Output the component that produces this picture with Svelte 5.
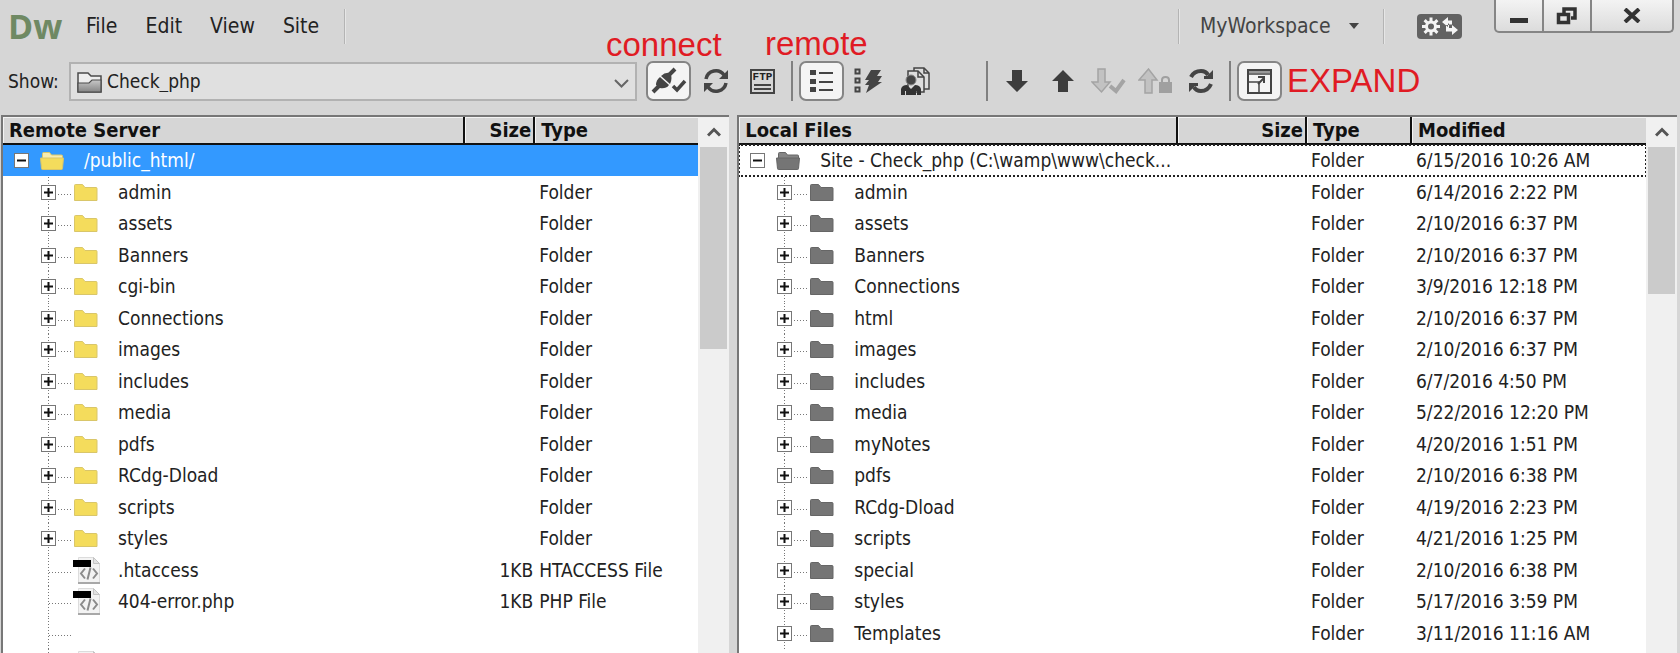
<script>
  const menus = ["File", "Edit", "View", "Site"];

  const remoteRows = [
    { name: "/public_html/", kind: "root", size: "", type: "" },
    { name: "admin", kind: "folder", size: "", type: "Folder" },
    { name: "assets", kind: "folder", size: "", type: "Folder" },
    { name: "Banners", kind: "folder", size: "", type: "Folder" },
    { name: "cgi-bin", kind: "folder", size: "", type: "Folder" },
    { name: "Connections", kind: "folder", size: "", type: "Folder" },
    { name: "images", kind: "folder", size: "", type: "Folder" },
    { name: "includes", kind: "folder", size: "", type: "Folder" },
    { name: "media", kind: "folder", size: "", type: "Folder" },
    { name: "pdfs", kind: "folder", size: "", type: "Folder" },
    { name: "RCdg-Dload", kind: "folder", size: "", type: "Folder" },
    { name: "scripts", kind: "folder", size: "", type: "Folder" },
    { name: "styles", kind: "folder", size: "", type: "Folder" },
    { name: ".htaccess", kind: "file", size: "1KB", type: "HTACCESS File" },
    { name: "404-error.php", kind: "file", size: "1KB", type: "PHP File" },
    { name: "", kind: "blank", size: "", type: "" },
    { name: "", kind: "file", size: "", type: "" },
  ];

  const localRows = [
    ["Site - Check_php (C:\\wamp\\www\\check...", "6/15/2016 10:26 AM"],
    ["admin", "6/14/2016 2:22 PM"],
    ["assets", "2/10/2016 6:37 PM"],
    ["Banners", "2/10/2016 6:37 PM"],
    ["Connections", "3/9/2016 12:18 PM"],
    ["html", "2/10/2016 6:37 PM"],
    ["images", "2/10/2016 6:37 PM"],
    ["includes", "6/7/2016 4:50 PM"],
    ["media", "5/22/2016 12:20 PM"],
    ["myNotes", "4/20/2016 1:51 PM"],
    ["pdfs", "2/10/2016 6:38 PM"],
    ["RCdg-Dload", "4/19/2016 2:23 PM"],
    ["scripts", "4/21/2016 1:25 PM"],
    ["special", "2/10/2016 6:38 PM"],
    ["styles", "5/17/2016 3:59 PM"],
    ["Templates", "3/11/2016 11:16 AM"],
  ].map(([name, modified], i) => ({
    name,
    kind: i == 0 ? "root" : "folder",
    size: "",
    type: "Folder",
    modified,
  }));

  const panels = [
    { id: "remote", title: "Remote Server", rows: remoteRows, thumb: 40 },
    { id: "local", title: "Local Files", rows: localRows, thumb: 29 },
  ];

  let site = $state("Check_php");
  let workspace = $state("MyWorkspace");
  let view = $state("files");
  let connected = $state(true);
  let expanded = $state(true);
</script>

{#snippet folder(open, local)}
  <svg class="icon" width="30" height="31" viewBox="0 0 30 31" aria-hidden="true">
    <g
      fill={local ? "#757575" : "#f4dc5c"}
      stroke={local ? "#666" : "#d9c66a"}
      stroke-linejoin="round"
    >
      {#if open}
        <path
          d="M4.500 13V8.500q0-1 1-1h6l2 2.500h10q1 0 1 1v2"
          fill={local ? "#858585" : "#f7ecb0"}
        />
        <path d="M2.500 13h23l-1 10.500q0 1-1 1h-19q-1 0-1-1z" />
      {:else}
        <path d="M2.500 23.500v-15q0-1 1-1h7l2.500 3h11q1 0 1 1v12z" />
      {/if}
    </g>
  </svg>
{/snippet}

{#snippet file()}
  <svg class="icon" width="30" height="31" viewBox="0 0 30 31" aria-hidden="true">
    <path d="M6.500 2.500h15l6 6v19h-21z" fill="#f3f3f3" stroke="#dcdcdc" />
    <path d="M21.500 2.500v6h6z" fill="#e2e2e2" stroke="#c4c4c4" />
    <path d="M6 28h22" stroke="#a8a8a8" stroke-width="2" />
    <path
      d="M13 13.500l-4 5 4 5M21 13.500l4 5-4 5M18.500 12.500l-3 12"
      fill="none"
      stroke="#8b8b8b"
      stroke-width="2"
    />
    <path d="M1 5h18v7H1z" fill="#000" />
  </svg>
{/snippet}

<div class="window">
  <header class="menubar">
    <span class="logo">Dw</span>
    <nav>
      {#each menus as menu}
        <button class="menu">{menu}</button>
      {/each}
    </nav>
    <span class="rule"></span>
    <div class="right">
      <span class="rule"></span>
      <div class="workspace">
        <select bind:value={workspace} aria-label="Workspace">
          <option>MyWorkspace</option>
        </select>
        <svg width="10" height="6" viewBox="0 0 10 6"><path d="M0 0h10L5 6z" fill="#444" /></svg>
      </div>
      <span class="rule"></span>
      <button class="sync" aria-label="Sync settings">
        <svg width="45" height="25" viewBox="0 0 45 25">
          <g stroke="#f4f4f4" fill="none">
            <circle cx="14" cy="12.500" r="4.500" stroke-width="3" />
            <path
              d="M14 3.500v4M14 17.500v4M5 12.500h4M19 12.500h4M7.600 6.100l3 3M17.400 15.900l3 3M7.600 18.900l3-3M17.400 9.100l3-3"
              stroke-width="3"
            />
          </g>
          <path
            d="M25 8l6-5v3.500h4v4h-3v-1h-1V13zM41 16l-6-5v3h-3v-3h-3v6.500h6V21z"
            fill="#f4f4f4"
          />
        </svg>
      </button>
      <div class="controls">
        <button aria-label="Minimize">
          <svg width="18" height="16" viewBox="0 0 18 16"><path d="M0 10h18v5H0z" fill="#333" /></svg>
        </button>
        <button aria-label="Restore">
          <svg width="22" height="18" viewBox="0 0 22 18">
            <path d="M8 6V2h11v9h-4M2.500 7.500h10v8h-10z" fill="none" stroke="#333" stroke-width="3.500" />
          </svg>
        </button>
        <button class="close" aria-label="Close">
          <svg width="18" height="15" viewBox="0 0 18 15">
            <path d="M2 1l14 13M16 1L2 14" stroke="#333" stroke-width="4" />
          </svg>
        </button>
      </div>
    </div>
  </header>

  <div class="toolbar">
    <label class="show" for="site">Show:</label>
    <div class="site">
      <svg class="site-icon" width="25" height="21" viewBox="0 0 25 21">
        <defs>
          <linearGradient id="metal" x2="0" y2="1">
            <stop offset="0" stop-color="#c8c8c8" />
            <stop offset="1" stop-color="#858585" />
          </linearGradient>
        </defs>
        <path d="M1 20V1h10l3 3h10v16z" fill="#eee" stroke="#4b4b4b" stroke-width="1.500" />
        <path d="M1 20v-9h11l3-3h9v12z" fill="url(#metal)" stroke="#4b4b4b" stroke-width="1.200" />
      </svg>
      <select id="site" bind:value={site}>
        <option>Check_php</option>
      </select>
      <svg class="chevron" width="15" height="9" viewBox="0 0 15 9">
        <path d="M1 1l6.500 6.500L14 1" fill="none" stroke="#666" stroke-width="2" />
      </svg>
    </div>

    <div class="group">
      <span class="note above">connect</span>
      <button
        class="tool"
        class:pressed={connected}
        aria-label="Connect"
        onclick={() => (connected = !connected)}
      >
        <svg width="36" height="28" viewBox="0 0 36 28">
          <path d="M2 25l7-7M18 8l6-6" stroke="#444" stroke-width="4" />
          <path d="M5 18q0-5 4-8l9 8q-3 4-9 3z" fill="#444" />
          <path d="M10 9q4-4 9-3 3 5 0 11z" fill="#444" />
          <path d="M22 19l4 4 8-9" fill="none" stroke="#444" stroke-width="3.500" />
        </svg>
      </button>
      <button class="tool" aria-label="Refresh">
        <svg width="26" height="26" viewBox="0 0 26 26">
          <path d="M3 11a10 10 0 0 1 18-4M23 15a10 10 0 0 1-18 4" fill="none" stroke="#444" stroke-width="3.500" />
          <path d="M25 2v9h-9zM1 24v-9h9z" fill="#444" />
        </svg>
      </button>
      <button class="tool ftp" aria-label="FTP log">
        <span>FTP</span>
        <i></i>
        <i></i>
      </button>
    </div>
    <span class="divider"></span>
    <div class="group">
      <span class="note above">remote</span>
      <button
        class="tool"
        class:pressed={view == "files"}
        aria-label="Site files"
        onclick={() => (view = "files")}
      >
        <svg width="24" height="24" viewBox="0 0 24 24">
          <path d="M0 1h6v5H0zM0 10h6v5H0zM0 18h6v5H0z" fill="#444" />
          <path d="M9 4h14M9 13h14M9 21h14" stroke="#444" stroke-width="2" />
        </svg>
      </button>
      <button
        class="tool"
        class:pressed={view == "testing"}
        aria-label="Testing server"
        onclick={() => (view = "testing")}
      >
        <svg width="29" height="26" viewBox="0 0 29 26">
          <path
            d="M1.500 1.500h4v4h-4zM1.500 10.500h4v4h-4zM1.500 19.500h4v4h-4z"
            fill="none"
            stroke="#444"
            stroke-width="2"
          />
          <path d="M17 2h10l-4 6h5l-4 6h4L12 25l3-8h-4l4-5h-4z" fill="#444" />
        </svg>
      </button>
      <button
        class="tool"
        class:pressed={view == "repository"}
        aria-label="Repository files"
        onclick={() => (view = "repository")}
      >
        <svg width="29" height="29" viewBox="0 0 29 29">
          <g fill="#ddd" stroke="#444" stroke-width="1.500">
            <path d="M13 1h10l5 5v16H13z" />
            <path d="M7 4h10l6 6v15H7z" />
            <path d="M17 4v6h6M23 1v5h5" fill="none" />
          </g>
          <circle cx="10" cy="13" r="5" fill="#444" stroke="#888" />
          <path d="M0 28v-6q1-4 6-4l4 4 4-4q5 0 6 4v6h-4v-4h-1v4H5v-4H4v4z" fill="#333" />
        </svg>
      </button>
    </div>
    <span class="divider far"></span>
    <div class="group tight">
      <button class="tool" aria-label="Get files">
        <svg width="22" height="22" viewBox="0 0 22 22"><path d="M6 0h10v11h6L11 22 0 11h6z" fill="#3d3d3d" /></svg>
      </button>
      <button class="tool" aria-label="Put files">
        <svg width="22" height="22" viewBox="0 0 22 22"><path d="M6 22h10V11h6L11 0 0 11h6z" fill="#3d3d3d" /></svg>
      </button>
      <button class="tool" aria-label="Check out files" disabled>
        <svg width="35" height="26" viewBox="0 0 35 26">
          <path d="M7 1h7v13h5l-8.500 10L1 14h6z" fill="#c2c2c2" stroke="#a4a4a4" stroke-width="1.500" />
          <path d="M19 18l6 5 8-11" fill="none" stroke="#a4a4a4" stroke-width="4" />
        </svg>
      </button>
      <button class="tool" aria-label="Check in" disabled>
        <svg width="34" height="26" viewBox="0 0 34 26">
          <path d="M7 25h7V12h5L10.500 1 1 12h6z" fill="#c2c2c2" stroke="#a4a4a4" stroke-width="1.500" />
          <path d="M21 14h13v11H21z" fill="#a0a0a0" />
          <path d="M24 15v-3q0-3 3.500-3t3.500 3v3" fill="none" stroke="#a0a0a0" stroke-width="2" />
        </svg>
      </button>
      <button class="tool" aria-label="Synchronize">
        <svg width="24" height="24" viewBox="0 0 24 24">
          <path d="M2 8q3-6 10-6 5 0 7 4M22 15q-3 7-10 7-5 0-7-4" fill="none" stroke="#444" stroke-width="4" />
          <path d="M24 1v9h-9v-3h3zM0 23v-9h9v3H6z" fill="#444" />
        </svg>
      </button>
    </div>
    <span class="divider"></span>
    <button
      class="tool"
      class:pressed={expanded}
      aria-label="Expand"
      onclick={() => (expanded = !expanded)}
    >
      <svg width="25" height="25" viewBox="0 0 25 25">
        <path d="M1 1h23v23H1z" fill="#f4f4f4" stroke="#444" stroke-width="2" />
        <path d="M2 2h21v2H2z" fill="#999" />
        <path d="M1 5h23M1 13h11v11" fill="none" stroke="#444" stroke-width="1.500" />
        <path d="M11 15l6-6M11 8h6v6" fill="none" stroke="#444" stroke-width="2" />
      </svg>
    </button>
    <span class="note">EXPAND</span>
  </div>

  <main>
    {#each panels as panel}
      <section class={panel.id}>
        <div class="list">
          <table>
            <colgroup>
              <col />
              <col class="col-size" />
              <col class="col-type" />
              {#if panel.id == "local"}
                <col class="col-modified" />
              {/if}
            </colgroup>
            <thead>
              <tr>
                <th>{panel.title}</th>
                <th class="size">Size</th>
                <th>Type</th>
                {#if panel.id == "local"}
                  <th>Modified</th>
                {/if}
              </tr>
            </thead>
            <tbody>
              {#each panel.rows as row}
                <tr class={row.kind}>
                  <td class="name">
                    <div class="node">
                      <span class="branch">
                        {#if row.kind == "root" || row.kind == "folder"}
                          <button class="toggle" aria-label="Toggle {row.name}">
                            <svg width="15" height="15" viewBox="0 0 15 15">
                              <path
                                d={row.kind == "root" ? "M3 7.500h9" : "M3 7.500h9M7.500 3v9"}
                                stroke="#111"
                                stroke-width="2"
                              />
                            </svg>
                          </button>
                        {/if}
                      </span>
                      {#if row.kind == "file"}
                        {@render file()}
                      {:else if row.kind != "blank"}
                        {@render folder(row.kind == "root", panel.id == "local")}
                      {/if}
                      <span class="label">{row.name}</span>
                    </div>
                  </td>
                  <td class="size">{row.size}</td>
                  <td>{row.type}</td>
                  {#if panel.id == "local"}
                    <td>{row.modified}</td>
                  {/if}
                </tr>
              {/each}
            </tbody>
          </table>
        </div>
        <div class="scrollbar">
          <button aria-label="Scroll up">
            <svg width="14" height="10" viewBox="0 0 14 10">
              <path d="M1 8.500l6-6 6 6" fill="none" stroke="#555" stroke-width="3" />
            </svg>
          </button>
          <div class="track">
            <div class="thumb" style="height: {panel.thumb}%"></div>
          </div>
        </div>
      </section>
    {/each}
  </main>
</div>

<style>
  :global(body) {
    background: #d6d6d6;
  }

  .window {
    display: flex;
    flex-direction: column;
    height: 100vh;
    overflow: hidden;
    background: #d6d6d6;
    color: #222;
    font-family: "DejaVu Sans Condensed", "DejaVu Sans", sans-serif;
    font-size: 19px;
  }

  button,
  select {
    margin: 0;
    padding: 0;
    border: 0;
    background: none;
    color: inherit;
    font: inherit;
    appearance: none;
  }

  svg {
    display: block;
    flex: none;
  }

  .menubar {
    display: flex;
    align-items: center;
    height: 52px;
    flex: none;
    padding-left: 8px;
    font-size: 21px;
  }

  .logo {
    width: 78px;
    color: #6f8963;
    font-family: "Open Sans", "Noto Sans", sans-serif;
    font-size: 34px;
    font-weight: bold;
    line-height: 52px;
  }

  nav {
    display: flex;
    gap: 28px;
    margin-right: 25px;
  }

  .rule {
    width: 1px;
    height: 35px;
    background: #b4b4b4;
    border-right: 1px solid #e6e6e6;
  }

  .right {
    display: flex;
    align-items: center;
    align-self: stretch;
    margin-left: auto;
    padding-right: 6px;
  }

  .workspace {
    display: flex;
    align-items: center;
    gap: 18px;
    padding: 0 24px 0 20px;
    color: #444;
  }

  .sync {
    margin: 0 32px;
    border-radius: 4px;
    background: #626262;
  }

  .controls {
    display: flex;
    align-self: flex-start;
    height: 31px;
    border: 2px solid #858585;
    border-top: 0;
    border-radius: 0 0 5px 5px;
    background: linear-gradient(#f3f3f3, #dcdcdc);
  }

  .controls button {
    display: flex;
    align-items: center;
    justify-content: center;
    width: 48px;
    border-right: 2px solid #858585;
  }

  .controls .close {
    width: 80px;
    border-right: 0;
  }

  .toolbar {
    display: flex;
    flex: none;
    align-items: center;
    height: 40px;
    padding: 9px 8px 14px;
  }

  .show {
    width: 61px;
  }

  .site {
    display: flex;
    flex: 0 1 568px;
    position: relative;
    height: 39px;
    margin-right: 9px;
  }

  .site select {
    width: 100%;
    padding-left: 36px;
    border: 2px solid #b2b2b2;
    background: #e0e0e0;
  }

  .site-icon {
    position: absolute;
    left: 8px;
    top: 10px;
  }

  .chevron {
    position: absolute;
    right: 8px;
    top: 17px;
  }

  .group {
    display: flex;
    gap: 2px;
    position: relative;
  }

  .tight {
    gap: 1px;
  }

  .tool {
    display: flex;
    flex: none;
    align-items: center;
    justify-content: center;
    width: 45px;
    height: 40px;
    box-sizing: border-box;
  }

  .pressed {
    border: 2px solid #858585;
    border-radius: 7px;
    background: #f4f4f4;
  }

  .ftp {
    width: 25px;
    height: 25px;
    margin: 8px 10px;
    border: 2px solid #444;
    flex-direction: column;
    gap: 2px;
  }

  .ftp span {
    font-family: "Liberation Mono", monospace;
    font-size: 11px;
    font-weight: bold;
    line-height: 10px;
  }

  .ftp i {
    width: 17px;
    height: 2px;
    background: #444;
  }

  .divider {
    width: 2px;
    height: 40px;
    margin: 0 6px;
    background: #808080;
  }

  .far {
    margin-left: 48px;
  }

  .note {
    margin-left: 5px;
    color: #e01b24;
    font-family: "Liberation Sans", Arial, sans-serif;
    font-size: 33px;
    line-height: 40px;
  }

  .above {
    position: absolute;
    left: -40px;
    bottom: 37px;
    margin: 0;
  }

  .group:not(:has(.ftp)) .above {
    left: -34px;
  }

  main {
    display: flex;
    flex: 1;
    min-height: 0;
    gap: 8px;
    padding: 0 3px 0 1px;
  }

  section {
    display: flex;
    min-width: 0;
    overflow: hidden;
    border-top: 2px solid #777;
    border-left: 2px solid #777;
    background: #fff;
  }

  .remote {
    flex: 728;
  }

  .local {
    flex: 940;
  }

  .list {
    flex: 1;
    min-width: 0;
    overflow: hidden;
  }

  table {
    width: 100%;
    table-layout: fixed;
    border-spacing: 0;
  }

  .remote .col-size {
    width: 70px;
  }

  .local .col-size {
    width: 129px;
  }

  .remote .col-type {
    width: 163px;
  }

  .local .col-type {
    width: 105px;
  }

  .col-modified {
    width: 234px;
  }

  th {
    height: 26px;
    padding: 0 0 0 6px;
    border: solid #111;
    border-width: 0 2px 2px 0;
    background: #d6d6d6;
    box-shadow: inset 1px 1px #f4f4f4;
    color: #111;
    font-size: 20px;
    line-height: 26px;
    text-align: left;
  }

  th:last-child {
    border-right: 0;
  }

  td {
    height: 31px;
    padding: 0 0 0 4px;
    line-height: 31px;
    white-space: nowrap;
  }

  tr:nth-child(even) td {
    height: 32px;
  }

  .size {
    padding-right: 2px;
    text-align: right;
  }

  .name {
    padding: 0;
    overflow: hidden;
  }

  .node {
    display: flex;
    align-items: center;
    height: 31px;
  }

  .branch {
    display: flex;
    flex: none;
    align-items: center;
    width: 31px;
    height: 31px;
    margin-left: 38px;
    background:
      repeating-linear-gradient(#777 0 1px, transparent 1px 3px) 7px 0 / 1px 100% no-repeat,
      repeating-linear-gradient(90deg, #777 0 1px, transparent 1px 3px) 8px 17px / 22px 1px no-repeat;
  }

  .root .branch {
    width: 24px;
    margin-left: 11px;
    background: none;
  }

  .toggle {
    box-sizing: border-box;
    width: 15px;
    height: 15px;
    background: #fff;
    outline: 1px solid #777;
    outline-offset: -1px;
  }

  .label {
    margin-left: 16px;
  }

  .remote .root td {
    background: #3399ff;
    color: #fff;
  }

  .local .root {
    outline: 2px dotted #222;
    outline-offset: -1px;
  }

  .scrollbar {
    display: flex;
    flex-direction: column;
    width: 27px;
    padding: 0 2px;
    background: #f0f0f0;
  }

  .scrollbar button {
    display: flex;
    flex: none;
    align-items: center;
    justify-content: center;
    height: 30px;
  }

  .track {
    flex: 1;
  }

  .thumb {
    background: #cbcbcb;
  }
</style>
